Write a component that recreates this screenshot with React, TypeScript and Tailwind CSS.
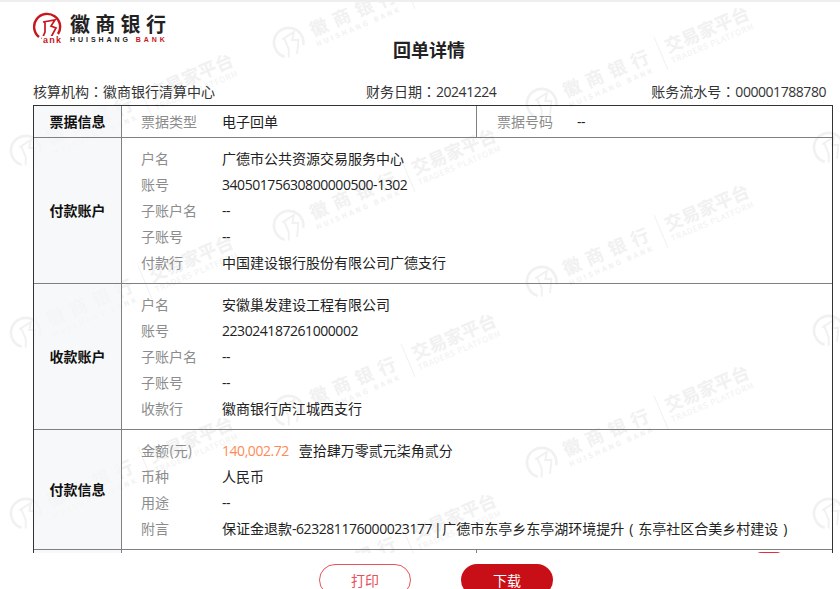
const FONT = "font-['Noto_Sans_CJK_SC',sans-serif]";

type Field = { label: string; value: React.ReactNode };

// 数字、字母窄一点
function Num({ children }: { children: React.ReactNode }) {
  return <span className="font-['Open_Sans',sans-serif] tracking-[-0.45px]">{children}</span>;
}

// 全角标点居中
function Punct({ children }: { children: React.ReactNode }) {
  return <span className="font-['Noto_Sans_CJK_TC',sans-serif]">{children}</span>;
}

// 全角括号，字形居中
function Paren({ children }: { children: React.ReactNode }) {
  return <span className="inline-block w-[14px] text-center font-['Open_Sans',sans-serif]">{children}</span>;
}

const payer: Field[] = [
  { label: "户名", value: "广德市公共资源交易服务中心" },
  { label: "账号", value: <Num>34050175630800000500-1302</Num> },
  { label: "子账户名", value: <Num>--</Num> },
  { label: "子账号", value: <Num>--</Num> },
  { label: "付款行", value: "中国建设银行股份有限公司广德支行" },
];

const payee: Field[] = [
  { label: "户名", value: "安徽巢发建设工程有限公司" },
  { label: "账号", value: <Num>223024187261000002</Num> },
  { label: "子账户名", value: <Num>--</Num> },
  { label: "子账号", value: <Num>--</Num> },
  { label: "收款行", value: "徽商银行庐江城西支行" },
];

const payment: Field[] = [
  {
    label: "金额(元)",
    value: (
      <>
        <span className="text-[#ff8a57] mr-[10px]">
          <Num>140,002.72</Num>
        </span>
        壹拾肆万零贰元柒角贰分
      </>
    ),
  },
  { label: "币种", value: "人民币" },
  { label: "用途", value: <Num>--</Num> },
  {
    label: "附言",
    value: (
      <>
        保证金退款<Num>-623281176000023177</Num>
        <span className="ml-[2px] mr-px"><Num>|</Num></span>广德市东亭乡东亭湖环境提升
        <Paren>(</Paren>东亭社区合美乡村建设<Paren>)</Paren>
      </>
    ),
  },
];

// 水印位置（圆标中心）
const marks = [
  [27, 150], [27, 332], [27, 513],
  [290, 42], [290, 225], [290, 410], [290, 590],
  [543, 103], [543, 281], [543, 462],
  [830, 147], [830, 330], [830, 513],
];

function BankMark({ className, color }: { className: string; color: string }) {
  return (
    <svg viewBox="0 0 30 30" className={className} fill="none" stroke={color}>
      <path d="M6 25 A13 13 0 1 1 25 22" strokeWidth="2.4" />
      <path d="M10 10 L22 8 L18 14 L23 16 L17 27 M12 10 L12 20 L9 27" strokeWidth="1.7" />
    </svg>
  );
}

function Watermark({ x, y }: { x: number; y: number }) {
  return (
    <div
      className="absolute flex items-center origin-left -rotate-[23deg] text-[#f1f1f1] whitespace-nowrap"
      style={{ left: x - 16, top: y - 11 }}
    >
      <BankMark className="w-[34px] h-[36px] mr-[7px]" color="#f1f1f1" />
      <div className="flex flex-col">
        <span className="text-[18px] leading-[24px] font-bold tracking-[6.5px]">徽商银行</span>
        <span className="text-[7px] leading-[9px] font-bold tracking-[2.6px]">HUISHANG BANK</span>
      </div>
      <div className="w-px h-[36px] bg-[#f1f1f1] mx-[6px]" />
      <div className="flex flex-col">
        <span className="text-[18px] leading-[22px] font-bold">交易家平台</span>
        <span className="text-[8px] leading-[10px] tracking-[0.8px]">TRADERS PLATFORM</span>
      </div>
    </div>
  );
}

function Section({ title, fields }: { title: string; fields: Field[] }) {
  return (
    <div className="flex border-b border-[#808080]">
      <div className="w-[88px] shrink-0 flex items-center justify-center font-bold text-[#111] bg-[#f5f6f8]/80 border-r border-[#808080]">
        {title}
      </div>
      <div className="flex-1 pt-[7px] pb-[8px] pl-[19px]">
        {fields.map((f) => (
          <div key={f.label} className="flex h-[26px] items-center">
            <span className="w-[81px] shrink-0 text-[#8c8c8c]">{f.label}</span>
            <span className="text-[#222]">{f.value}</span>
          </div>
        ))}
      </div>
    </div>
  );
}

export default function App() {
  return (
    <div className={`relative w-[840px] h-[589px] overflow-hidden bg-white text-[14px] ${FONT}`}>
      <div className="absolute inset-0">
        {marks.map(([x, y]) => (
          <Watermark key={`${x}-${y}`} x={x} y={y} />
        ))}
      </div>

      <div className="relative h-[553px] overflow-hidden border-t-2 border-[#eeeeee]">
        <header className="relative h-[76px]">
          <div className="flex items-start pl-[33px] pt-[10px]">
            <div className="relative w-[32px] h-[32px] mr-[5px]">
              <BankMark className="w-[30px] h-[30px]" color="#c8161d" />
              <span className="absolute left-[9px] bottom-[-1px] bg-white pl-px text-[9px] leading-[9px] font-['Liberation_Sans',sans-serif] font-bold tracking-[1.2px] text-[#c8161d]">ank</span>
            </div>
            <div className="flex flex-col">
              <span className="text-[20px] leading-[24px] font-bold tracking-[5.3px] text-[#222]">徽商银行</span>
              <span className="text-[7px] leading-[8px] font-['Liberation_Sans',sans-serif] font-bold tracking-[2.95px] text-[#222]">
                HUISHANG <span className="text-[#c8161d]">BANK</span>
              </span>
            </div>
          </div>
          <h1 className="absolute left-[393px] top-[35px] text-[18px] leading-[24px] font-bold text-[#222]">回单详情</h1>
        </header>

        <div className="flex justify-between pl-[33px] pr-[14px] h-[27px] items-center text-[#333]">
          <span>核算机构<Punct>：</Punct>徽商银行清算中心</span>
          <span className="-ml-[4px]">财务日期<Punct>：</Punct><Num>20241224</Num></span>
          <span>账务流水号<Punct>：</Punct><Num>000001788780</Num></span>
        </div>

        <div className="ml-[33px] w-[800px] border-t border-x border-[#333]">
          <div className="flex h-[32px] border-b border-[#808080]">
            <div className="w-[88px] shrink-0 flex items-center justify-center font-bold text-[#111] bg-[#f5f6f8]/80 border-r border-[#808080]">
              票据信息
            </div>
            <div className="w-[355px] flex items-center pl-[19px] border-r border-[#808080]">
              <span className="w-[81px] text-[#8c8c8c]">票据类型</span>
              <span className="text-[#222]">电子回单</span>
            </div>
            <div className="flex items-center pl-[20px]">
              <span className="w-[80px] text-[#8c8c8c]">票据号码</span>
              <span className="text-[#222]"><Num>--</Num></span>
            </div>
          </div>
          <Section title="付款账户" fields={payer} />
          <Section title="收款账户" fields={payee} />
          <Section title="付款信息" fields={payment} />
          <div className="flex h-[30px]">
            <div className="w-[88px] bg-[#f5f6f8]/80 border-r border-[#808080]" />
            <div className="w-[355px] border-r border-[#808080]" />
            <div className="ml-[278px] mt-[2px] w-[28px] h-[12px] rounded-full bg-[#e0303f]" />
          </div>
        </div>
      </div>

      <footer className="relative flex gap-[50px] h-[36px] pt-[11px] pl-[319px] bg-white">
        <button className="w-[92px] h-[32px] rounded-[16px] border border-[#e8505b] bg-white text-[#e8505b]">打印</button>
        <button className="w-[92px] h-[32px] rounded-[16px] bg-[#c80f17] text-white">下载</button>
      </footer>
    </div>
  );
}
